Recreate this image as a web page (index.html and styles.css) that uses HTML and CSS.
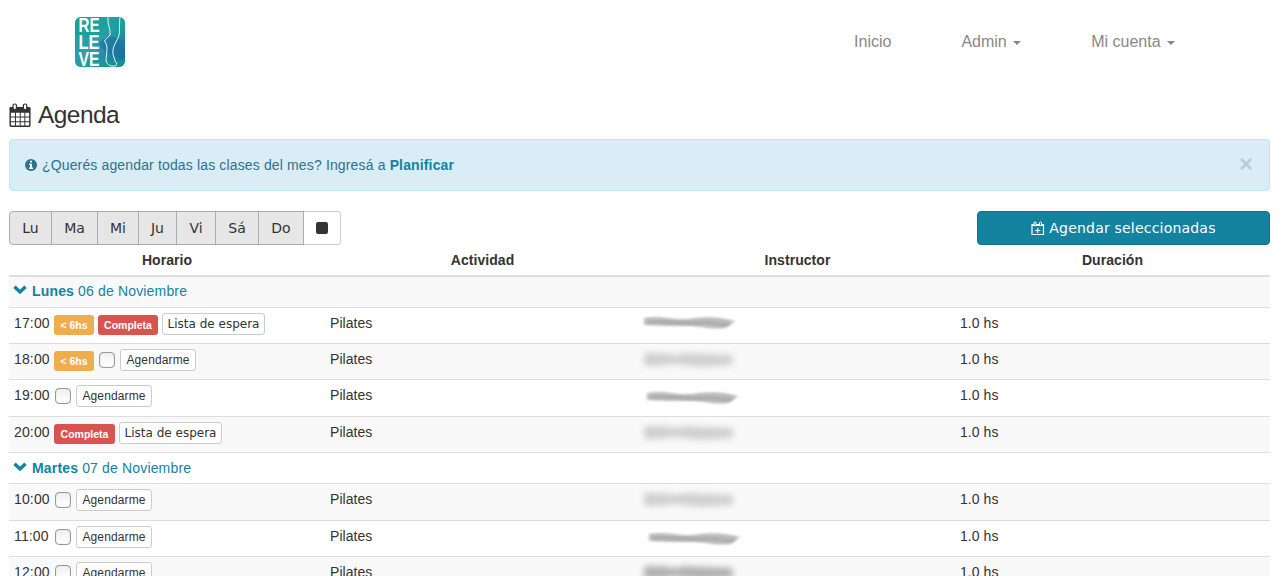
FILE: index.html
```html
<!DOCTYPE html>
<html lang="es">
<head>
<meta charset="utf-8">
<title>Agenda</title>
<link rel="stylesheet" href="styles.css">
</head>
<body>
<svg class="defs" width="0" height="0" aria-hidden="true">
  <defs>
    <filter id="soft" x="-10%" y="-60%" width="120%" height="220%"><feGaussianBlur stdDeviation="1.8 1.3"/></filter>
    <filter id="haze" x="-10%" y="-60%" width="120%" height="220%"><feGaussianBlur stdDeviation="3"/></filter>
    <symbol id="smudge" viewBox="0 0 110 26">
      <path d="M8 7C25 4 35 9 50 8S75 4 99 10L90 17C75 19 65 15 52 15S20 15 8 14Z" fill="#bdbdbd" filter="url(#soft)"/>
      <path d="M12 11C35 10 48 13 65 12S82 15 93 13" fill="none" stroke="#aaa" stroke-width="3" filter="url(#soft)"/>
    </symbol>
    <symbol id="name" viewBox="0 0 110 26">
      <path d="M8 6H28L38 8L50 6L97 8V18L65 20L38 17L25 19H8Z" fill="#d0d0d0" filter="url(#haze)"/>
    </symbol>
    <symbol id="chevron" viewBox="0 0 14 10"><path d="M1.500 1.800L7 7L12.500 1.800" fill="none" stroke="#14839f" stroke-width="3.400"/></symbol>
  </defs>
</svg>
<header class="navbar">
  <svg class="logo" width="50" height="51" viewBox="0 0 50 51" role="img" aria-label="Releve">
    <defs>
      <linearGradient id="sea" x1="0" y1="0" x2="1" y2=".8"><stop offset="0" stop-color="#18a397"/><stop offset=".5" stop-color="#2c9fab"/><stop offset="1" stop-color="#17789b"/></linearGradient>
      <clipPath id="round"><rect width="50" height="50" rx="6"/></clipPath>
    </defs>
    <g clip-path="url(#round)">
      <rect width="50" height="51" fill="url(#sea)"/>
      <path d="M0 0H50V19C33 12 24 24 0 18Z" fill="#16a394" opacity=".55"/>
      <path d="M24 26C32 15 43 21 50 25V40C40 42 28 36 24 26Z" fill="#1965a0" opacity=".45"/>
      <path d="M0 44C18 38 32 48 50 42V51H0Z" fill="#15a08f" opacity=".55"/>
      <path d="M33 0C32 7 36 12 35 18C33 21 30 22 29.500 24C34 29 31 38 31 44Q33 50 40 49L42 47.500M45 0C44 9 45 14 44 18C42 25 37 29 38 37L40 44L42 47" fill="none" stroke="#e4f5f7" stroke-width="1"/>
    </g>
    <g class="logo-text">
      <text x="3.500" y="15.300" textLength="21" lengthAdjust="spacingAndGlyphs">RE</text>
      <text x="3.500" y="32.300" textLength="21" lengthAdjust="spacingAndGlyphs">LE</text>
      <text x="3.500" y="49" textLength="21" lengthAdjust="spacingAndGlyphs">VE</text>
    </g>
  </svg>
  <nav class="menu">
    <a>Inicio</a>
    <a>Admin <span class="caret"></span></a>
    <a>Mi cuenta <span class="caret"></span></a>
  </nav>
</header>
<main>
  <h1 class="title">
    <svg width="23" height="25" viewBox="0 0 24 26">
      <path d="M1.900 4H20.900Q22.500 4 22.500 5.500V23.500Q22.500 25 21 25H2Q.5 25 .5 23.500V5.500Q.5 4 1.900 4Z" fill="#333"/>
      <path d="M2 10H6.300V14H2ZM7.300 10H11.200V14H7.300ZM12.200 10H16V14H12.200ZM17 10H21V14H17ZM2 15H6.300V19H2ZM7.300 15H11.200V19H7.300ZM12.200 15H16V19H12.200ZM17 15H21V19H17ZM2 20H6.300V23.500H2ZM7.300 20H11.200V23.500H7.300ZM12.200 20H16V23.500H12.200ZM17 20H21V23.500H17Z" fill="#fff"/>
      <rect x="4.200" y="1" width="3.600" height="6" rx="1.700" fill="#fff" stroke="#333" stroke-width="1.300"/>
      <rect x="15" y="1" width="3.600" height="6" rx="1.700" fill="#fff" stroke="#333" stroke-width="1.300"/>
    </svg>
    <span>Agenda</span>
  </h1>
  <div class="alert">
    <svg width="12" height="12" viewBox="0 0 12 12"><circle cx="6" cy="6" r="6" fill="#31708f"/><path d="M5 1.800H7V3.500H5ZM4 4.700H7V8.500H8V10H4V8.500H5V6H4Z" fill="#fff"/></svg>
    <span class="alert-text">¿Querés agendar todas las clases del mes? Ingresá a <b>Planificar</b></span>
    <span class="close">×</span>
  </div>
  <div class="toolbar">
    <div class="days">
      <button class="lu">Lu</button><button class="ma">Ma</button><button class="mi">Mi</button><button class="ju">Ju</button><button class="vi">Vi</button><button class="sa">Sá</button><button class="do">Do</button><button class="none"><span class="square"></span></button>
    </div>
    <button class="schedule">
      <svg width="14" height="15" viewBox="0 0 14 15" fill="none" stroke="#fff"><path d="M1 3.500V13.500H12.500V3.500Z" stroke-width="1.200"/><path d="M1 4H12.500" stroke-width="2"/><path d="M6.750 7V12M4.250 9.500H9.250" stroke-width="1.200"/><path d="M3 4V1.500Q4 .2 5 1.500V4M8.500 4V1.500Q9.500 .2 10.500 1.500V4" fill="#14839f" stroke-width="1"/></svg>
      <span>Agendar seleccionadas</span>
    </button>
  </div>
  <section class="table">
    <div class="row head"><span>Horario</span><span>Actividad</span><span>Instructor</span><span>Duración</span></div>
    <div class="group odd"><svg width="14" height="10"><use href="#chevron"/></svg><span><b>Lunes</b> 06 de Noviembre</span></div>
    <div class="row">
      <div class="slot"><span class="hour">17:00</span><span class="label warn">&lt; 6hs</span><span class="label full">Completa</span><button class="btn wait">Lista de espera</button></div>
      <span>Pilates</span><svg class="who" width="110" height="26"><use href="#smudge"/></svg><span>1.0 hs</span>
    </div>
    <div class="row odd">
      <div class="slot"><span class="hour">18:00</span><span class="label warn">&lt; 6hs</span><span class="check"></span><a class="btn">Agendarme</a></div>
      <span>Pilates</span><svg class="who" width="110" height="26"><use href="#name"/></svg><span>1.0 hs</span>
    </div>
    <div class="row tall">
      <div class="slot"><span class="hour">19:00</span><span class="check"></span><a class="btn">Agendarme</a></div>
      <span>Pilates</span><svg class="who shift" width="110" height="26"><use href="#smudge"/></svg><span>1.0 hs</span>
    </div>
    <div class="row odd">
      <div class="slot"><span class="hour">20:00</span><span class="label full wide">Completa</span><button class="btn wait">Lista de espera</button></div>
      <span>Pilates</span><svg class="who" width="110" height="26"><use href="#name"/></svg><span>1.0 hs</span>
    </div>
    <div class="group"><svg width="14" height="10"><use href="#chevron"/></svg><span><b>Martes</b> 07 de Noviembre</span></div>
    <div class="row tall odd">
      <div class="slot"><span class="hour">10:00</span><span class="check"></span><a class="btn">Agendarme</a></div>
      <span>Pilates</span><svg class="who" width="110" height="26"><use href="#name"/></svg><span>1.0 hs</span>
    </div>
    <div class="row">
      <div class="slot"><span class="hour">11:00</span><span class="check"></span><a class="btn">Agendarme</a></div>
      <span>Pilates</span><svg class="who shift more" width="110" height="26"><use href="#smudge"/></svg><span>1.0 hs</span>
    </div>
    <div class="row odd">
      <div class="slot"><span class="hour">12:00</span><span class="check"></span><a class="btn">Agendarme</a></div>
      <span>Pilates</span><svg class="who dark" width="110" height="26"><use href="#name"/></svg><span>1.0 hs</span>
    </div>
  </section>
</main>
</body>
</html>
```
FILE: styles.css
```css
* { box-sizing: border-box; }
body {
  margin: 0;
  height: 576px;
  overflow: hidden;
  background: #fff;
  color: #333;
  font: 14px/20px "Liberation Sans", Arial, sans-serif;
}
svg { display: block; flex: none; }
.defs { position: absolute; }
button { margin: 0; font: 14px/20px "DejaVu Sans", sans-serif; color: #333; white-space: nowrap; }

.navbar { display: flex; justify-content: space-between; height: 100px; padding: 17px 104px 0 75px; }
.logo { overflow: visible; }
.logo-text { fill: #fff; font: bold 20.500px "Liberation Sans", sans-serif; }
.menu { display: flex; gap: 70px; padding-top: 15px; font-size: 16px; color: #888; }
.caret { display: inline-block; margin-left: 2px; vertical-align: middle; border-top: 4px solid; border-left: 4px solid transparent; border-right: 4px solid transparent; }

main { padding: 0 9px; }
.title { display: flex; align-items: center; gap: 6px; height: 30px; margin: 0 0 9px; font-size: 24.500px; font-weight: 400; line-height: 30px; letter-spacing: -.55px; }
.alert { display: flex; align-items: center; gap: 5px; height: 52px; padding: 0 16px 0 15px; border: 1px solid #bce8f1; border-radius: 4px; background: #d9edf7; color: #31708f; }
.alert b { color: #14839f; }
.alert-text { flex: 1; letter-spacing: .145px; }
.close { font: bold 24px/20px "Liberation Sans", sans-serif; color: #b3cfdf; margin-top: -2px; }

.toolbar { display: flex; justify-content: space-between; height: 34px; margin-top: 20px; }
.days { display: flex; border-radius: 4px; }
.days button { padding: 0; height: 34px; border: 1px solid #adadad; border-left-width: 0; background: #e6e6e6; }
.days .lu { width: 43px; border-left-width: 1px; border-radius: 4px 0 0 4px; }
.days .ma { width: 46px; }
.days .mi { width: 41px; }
.days .ju { width: 38px; }
.days .vi { width: 39px; }
.days .sa { width: 43px; }
.days .do { width: 45px; }
.days .none { display: flex; align-items: center; justify-content: center; width: 37px; border-color: #ccc; border-radius: 0 4px 4px 0; background: #fff; }
.square { width: 12px; height: 12px; border-radius: 2px; background: #333; }
.schedule { display: flex; align-items: center; justify-content: center; gap: 4px; width: 293px; height: 34px; padding: 0; border: 1px solid #117087; border-radius: 4px; background: #14839f; color: #fff; letter-spacing: .2px; }

.row { display: grid; grid-template-columns: 316px 315px 315px 315px; height: 36px; padding-top: 5px; border-top: 1px solid #ddd; }
.row > span { padding-left: 5px; letter-spacing: .05px; }
.tall { height: 37px; }
.odd { background: #f9f9f9; }
.row.head { height: 30px; border-top: 0; font-weight: bold; text-align: center; }
.row.head > span { padding: 0; }
.group { display: flex; gap: 4px; height: 31px; padding: 5px 5px 0; border-top: 1px solid #ddd; color: #14839f; letter-spacing: .16px; }
.group svg { margin: 4px 1px 0 -1px; }
.head + .group { height: 32px; border-top-width: 2px; padding-top: 4px; }

.slot { display: flex; align-items: flex-start; gap: 4px; padding-left: 5px; }
.hour { width: 36px; letter-spacing: .15px; }
.label { height: 20px; margin-top: 2px; border-radius: 3px; color: #fff; font-size: 10.500px; font-weight: bold; line-height: 20px; text-align: center; }
.warn { width: 40px; background: #f0ad4e; }
.full { width: 60px; background: #d9534f; }
.wide { width: 61px; }
.btn { height: 22px; padding: 0; border: 1px solid #ccc; border-radius: 3px; background: #fff; font-size: 12px; line-height: 20px; white-space: nowrap; }
a.btn { width: 76px; text-align: center; letter-spacing: .12px; }
.wait { width: 103px; }
.check { width: 16px; height: 16px; margin: 3px 1px 0; border: 1px solid #999; border-radius: 4px; background: linear-gradient(#f0f0f0, #fff); box-shadow: inset 0 0 1px #aaa; }
.who { margin: -2px 0 0 -4px; overflow: visible; }
.shift { margin: 1px 0 0 -1px; }
.more { margin-left: 1px; }
.dark { filter: brightness(.85); }
```
